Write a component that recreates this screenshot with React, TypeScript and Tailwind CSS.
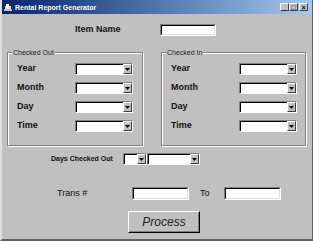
import React from "react";

// sunken white field, like a classic Win32 edit box
function Field({ w, h = "h-[13px]" }: { w: string; h?: string }) {
  return (
    <div className={`${w} ${h} bg-white border-t border-l border-t-[#808080] border-l-[#808080] border-b border-r border-b-white border-r-white`}>
      <div className="h-full w-full border-t border-l border-t-black border-l-black border-b border-r border-b-[#dfdfdf] border-r-[#dfdfdf]" />
    </div>
  );
}

function Combo({ w }: { w: string }) {
  return (
    <div className={`${w} h-[12px] flex bg-white border-t border-l border-t-[#808080] border-l-[#808080] border-b border-r border-b-white border-r-white`}>
      <div className="flex-1 border-t border-l border-t-black border-l-black" />
      <div className="w-[9px] h-full bg-[#c0c0c0] border-t border-l border-t-white border-l-white border-b border-r border-b-[#404040] border-r-[#404040] flex items-center justify-center">
        <svg width="5" height="3" viewBox="0 0 5 3">
          <path d="M0 0h5L2.5 3z" fill="#000" />
        </svg>
      </div>
    </div>
  );
}

function Group({ title, w, comboMl }: { title: string; w: string; comboMl: string }) {
  const rows = ["Year", "Month", "Day", "Time"];
  return (
    <div className={`${w} relative h-[94px] border border-[#808080] shadow-[1px_1px_0_#fff,inset_1px_1px_0_#fff]`}>
      <span className="absolute -top-[5px] left-[4px] bg-[#c0c0c0] px-[1px] text-[7px] leading-[9px] text-[#222]">
        {title}
      </span>
      <div className="flex flex-col gap-[7px] pt-[10px] pl-[9px]">
        {rows.map((r) => (
          <div key={r} className="flex items-center h-[12px]">
            <span className="w-[40px] text-[9px] font-bold text-[#111]">{r}</span>
            <div className={comboMl}>
              <Combo w="w-[58px]" />
            </div>
          </div>
        ))}
      </div>
    </div>
  );
}

export default function App() {
  return (
    <div
      className="w-[313px] h-[241px] bg-[#c0c0c0] flex flex-col border-l-2 border-l-[#dfdfdf] border-b-2 border-b-[#606060] border-r border-r-[#606060] overflow-hidden"
      style={{ fontFamily: '"Liberation Sans", Arial, sans-serif' }}
    >
      {/* title bar */}
      <div className="h-[14px] flex items-center bg-gradient-to-r from-[#0a246a] to-[#a6caf0] pl-[2px] pr-[3px]">
        <svg width="8" height="7" viewBox="0 0 8 7" className="mr-[3px]">
          <rect x="1" y="2" width="6" height="4" fill="#e0e0e0" />
          <rect x="2" y="0" width="3" height="3" fill="#fff" />
          <rect x="0" y="5" width="8" height="2" fill="#c0c0c0" />
        </svg>
        <span className="text-white font-bold text-[7px] leading-none">Rental Report Generator</span>
        <div className="ml-auto flex gap-0 mr-[1px]">
          {["_", "□", "×"].map((g, i) => (
            <div
              key={i}
              className={`w-[9px] h-[8px] bg-[#c0c0c0] border-t border-l border-t-white border-l-white border-b border-r border-b-[#404040] border-r-[#404040] flex items-center justify-center text-[7px] leading-none font-bold text-black ${i === 2 ? "ml-[1px]" : ""}`}
            >
              {g}
            </div>
          ))}
        </div>
      </div>

      {/* item name */}
      <div className="flex items-center mt-[10px] h-[12px]">
        <span className="ml-[73px] w-[85px] text-[9px] font-bold text-[#111]">Item Name</span>
        <Field w="w-[56px]" h="h-[12px]" />
      </div>

      {/* group boxes */}
      <div className="flex mt-[16px] ml-[5px]">
        <Group title="Checked Out" w="w-[136px]" comboMl="ml-[18px]" />
        <div className="ml-[18px]">
          <Group title="Checked In" w="w-[145px]" comboMl="ml-[28px]" />
        </div>
      </div>

      {/* days checked out */}
      <div className="flex items-center mt-[7px] h-[12px]">
        <span className="ml-[49px] text-[7px] font-bold text-[#111] w-[72px]">Days Checked Out</span>
        <Combo w="w-[24px]" />
        <Combo w="w-[53px]" />
      </div>

      {/* trans */}
      <div className="flex items-center mt-[22px] h-[13px]">
        <span className="ml-[55px] text-[9px] text-[#111] w-[75px]">Trans #</span>
        <Field w="w-[57px]" />
        <span className="ml-[11px] text-[9px] text-[#111] w-[24px]">To</span>
        <Field w="w-[57px]" />
      </div>

      {/* process */}
      <div className="mt-[9px] ml-[126px]">
        <button className="w-[72px] h-[22px] bg-[#c0c0c0] border-t border-l border-t-white border-l-white border-b border-r border-b-black border-r-black shadow-[inset_-1px_-1px_0_#808080] text-[12px] italic text-[#222]">
          Process
        </button>
      </div>
    </div>
  );
}
